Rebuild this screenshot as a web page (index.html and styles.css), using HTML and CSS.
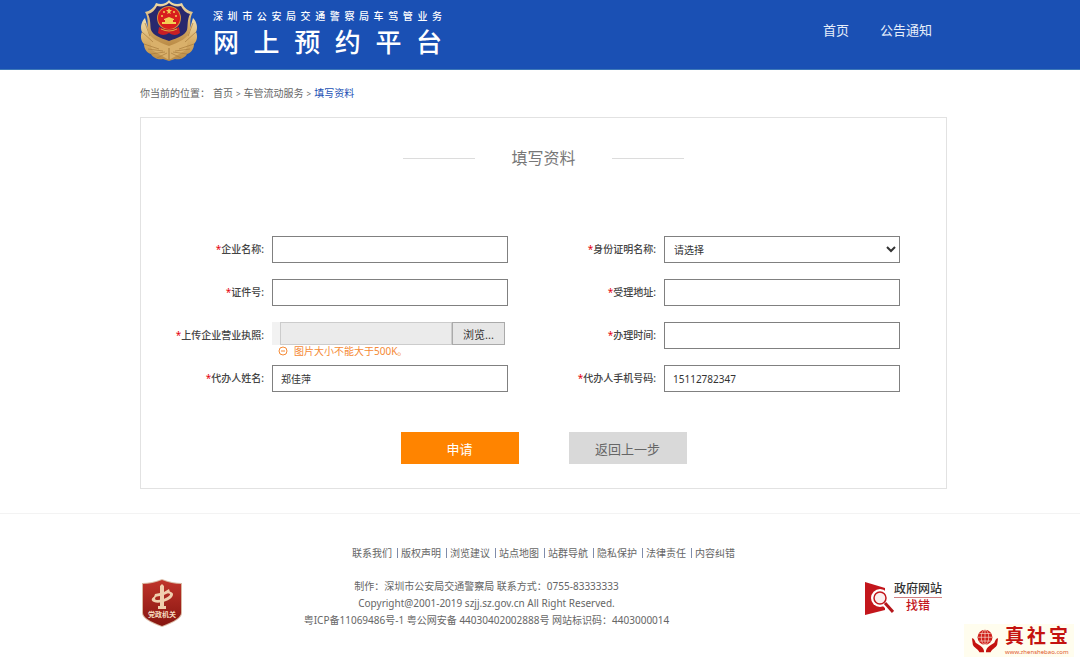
FILE: index.html
```
<!DOCTYPE html>
<html lang="zh-CN">
<head>
    <meta charset="UTF-8">
    <meta name="viewport" content="width=device-width, initial-scale=1.0">
    <title>网上预约平台 - 填写资料</title>
    <link rel="stylesheet" href="styles.css">
</head>
<body>
    <header class="header">
        <div class="container header-inner">
            <a href="#" class="brand">
                <svg class="emblem" viewBox="0 0 58 62" aria-hidden="true">
                    <defs>
                        <linearGradient id="gold" x1="0" y1="0" x2="0" y2="1">
                            <stop offset="0" stop-color="#f0dfb0"/>
                            <stop offset="0.5" stop-color="#d9b06a"/>
                            <stop offset="1" stop-color="#b98a45"/>
                        </linearGradient>
                    </defs>
                    <path fill="url(#gold)" d="M5 18C1 22 0 28 2 32C0 36 1 41 4 44C4 49 7 53 11 54C13 58 18 60 23 59L29 61L35 59C40 60 45 58 47 54C51 53 54 49 54 44C57 41 58 36 56 32C58 28 57 22 53 18L46 42L29 52L12 42Z"/>
                    <path fill="#d9b06a" d="M8 32L29 44L50 32L46 50L29 60L12 50Z"/>
                    <g fill="none" stroke="#a87b3c" stroke-width="0.7">
                        <path d="M2 32L13 42M4 44L19 49M11 54L25 52M5 23L10 36M8 49L23 51M17 58L27 53"/>
                        <path d="M56 32L45 42M54 44L39 49M47 54L33 52M53 23L48 36M50 49L35 51M41 58L31 53"/>
                    </g>
                    <path fill="url(#gold)" d="M29 0C32 4 37 5 42 3C44 8 48 11 53 12C49 18 51 25 50 31C48 38 40 42 29 46C18 42 10 38 8 31C7 25 9 18 5 12C10 11 14 8 16 3C21 5 26 4 29 0Z"/>
                    <path fill="#28286e" d="M29 3C32 6 37 7 41 6C43 10 46 13 50 14C47 20 48 26 47 30C45 35 38 38 29 41C20 38 13 35 11 30C10 26 11 20 8 14C12 13 15 10 17 6C21 7 26 6 29 3Z"/>
                    <circle cx="29" cy="18" r="12" fill="#d8903e"/>
                    <circle cx="29" cy="18" r="11" fill="#d81e1e"/>
                    <path fill="#c91f24" d="M19 27Q29 32 39 27L40 33Q35 37 29 33Q23 37 18 33Z"/>
                    <path fill="#f4cf55" d="M29 8L30 10L32 10L30 12L31 14L29 13L27 14L28 12L26 10L28 10ZM24 19L29 17L34 19V20H33V22H36V24H22V22H25V20H24Z"/>
                    <g fill="#f4cf55"><circle cx="24" cy="12" r="1"/><circle cx="34" cy="12" r="1"/><circle cx="22" cy="16" r="1"/><circle cx="36" cy="16" r="1"/></g>
                    <path fill="none" stroke="#e2a843" d="M21 29Q29 33 37 29"/>
                    <path fill="none" stroke="#94692f" stroke-width="0.8" d="M29 48V60"/>
                </svg>
                <span class="brand-text">
                    <span class="brand-sub">深圳市公安局交通警察局车驾管业务</span>
                    <span class="brand-name">网上预约平台</span>
                </span>
            </a>
            <nav class="nav">
                <a href="#">首页</a>
                <a href="#">公告通知</a>
            </nav>
        </div>
    </header>

    <main class="container">
        <nav class="breadcrumb">
            <span class="breadcrumb-label">你当前的位置：</span>
            <a href="#">首页</a>
            <span class="sep">&gt;</span>
            <a href="#">车管流动服务</a>
            <span class="sep">&gt;</span>
            <a href="#" class="current">填写资料</a>
        </nav>

        <section class="panel">
            <h1 class="panel-title">填写资料</h1>
            <form>
                <div class="form-grid">
                    <label for="company"><i>*</i>企业名称:</label>
                    <input type="text" id="company" class="field">

                    <label for="idType"><i>*</i>身份证明名称:</label>
                    <select id="idType" class="field">
                        <option>请选择</option>
                    </select>

                    <label for="idNumber"><i>*</i>证件号:</label>
                    <input type="text" id="idNumber" class="field">

                    <label for="address"><i>*</i>受理地址:</label>
                    <input type="text" id="address" class="field">

                    <label for="license"><i>*</i>上传企业营业执照:</label>
                    <div class="upload">
                        <div class="upload-row">
                            <input type="text" id="license" class="upload-path" readonly>
                            <button type="button" class="upload-btn">浏览...</button>
                        </div>
                        <p class="hint">
                            <svg viewBox="0 0 10 10" aria-hidden="true"><circle cx="5" cy="5" r="4"/><path d="M3 5H7"/></svg>
                            图片大小不能大于500K。
                        </p>
                    </div>

                    <label for="time"><i>*</i>办理时间:</label>
                    <input type="text" id="time" class="field">

                    <label for="agent"><i>*</i>代办人姓名:</label>
                    <input type="text" id="agent" class="field" value="郑佳萍">

                    <label for="phone"><i>*</i>代办人手机号码:</label>
                    <input type="tel" id="phone" class="field" value="15112782347">
                </div>
                <div class="actions">
                    <button type="submit" class="btn btn-primary">申请</button>
                    <button type="button" class="btn">返回上一步</button>
                </div>
            </form>
        </section>
    </main>

    <footer class="footer">
        <div class="container">
            <ul class="footer-links">
                <li><a href="#">联系我们</a></li>
                <li><a href="#">版权声明</a></li>
                <li><a href="#">浏览建议</a></li>
                <li><a href="#">站点地图</a></li>
                <li><a href="#">站群导航</a></li>
                <li><a href="#">隐私保护</a></li>
                <li><a href="#">法律责任</a></li>
                <li><a href="#">内容纠错</a></li>
            </ul>
            <div class="footer-info">
                <a href="#" class="gov-badge" aria-label="党政机关">
                    <svg viewBox="0 0 42 50">
                        <defs>
                            <linearGradient id="shield" x1="0" y1="0" x2="0" y2="1">
                                <stop offset="0" stop-color="#c0342a"/>
                                <stop offset="1" stop-color="#861510"/>
                            </linearGradient>
                        </defs>
                        <path d="M21 1Q31 5 41 5V35Q41 42 21 49Q1 42 1 35V5Q11 5 21 1Z" fill="#d9b9a4"/>
                        <path d="M21 2Q31 6 40 6V35Q40 41 21 48Q2 41 2 35V6Q11 6 21 2Z" fill="url(#shield)"/>
                        <g fill="#f0cfae">
                            <path d="M19 8L21 6L23 8V14L28 11L29 14L23 17V28H25V31H17V28H19V18L13 19L14 16L19 15Z"/>
                            <path d="M23 15C30 12 34 15 31 19C28 23 18 26 13 24C8 22 12 18 17 17C13 20 13 22 17 22C22 22 30 18 29 16C28 15 26 15 23 16Z"/>
                        </g>
                        <text x="21" y="39" text-anchor="middle" class="gov-badge-text">党政机关</text>
                    </svg>
                </a>
                <div class="footer-text">
                    <p>制作：深圳市公安局交通警察局 联系方式：0755-83333333</p>
                    <p>Copyright@2001-2019 szjj.sz.gov.cn All Right Reserved.</p>
                    <p>粤ICP备11069486号-1 粤公网安备 44030402002888号 网站标识码：4403000014</p>
                </div>
                <a href="#" class="report">
                    <svg viewBox="1 0 30 36" aria-hidden="true">
                        <path d="M2 1L22 7V29L2 34Z" fill="#c3161c"/>
                        <path d="M21 22L29 30" stroke="#fff" stroke-width="6"/>
                        <circle cx="17" cy="17" r="9" fill="#fff"/>
                        <circle cx="17" cy="17" r="6" fill="#fbeeee" stroke="#c3161c" stroke-width="1.5"/>
                        <path d="M22 22L30 31" stroke="#b5171c" stroke-width="3"/>
                    </svg>
                    <span class="report-text">
                        <span>政府网站</span>
                        <span class="report-action">找错</span>
                    </span>
                </a>
            </div>
        </div>
    </footer>

    <div class="watermark">
        <svg viewBox="0 0 30 26" aria-hidden="true">
            <circle cx="15" cy="9" r="8" fill="#cf1f1a"/>
            <g fill="none" stroke="#fffdee" stroke-width="0.6">
                <ellipse cx="15" cy="9" rx="4" ry="8"/>
                <path d="M15 1V17M7 9H23M9 5H21M9 13H21"/>
            </g>
            <g fill="#c4120f">
                <path d="M1 10C3 10 4 12 5 15L10 18C13 20 14 22 14 25H9C8 22 3 20 2 17Z"/>
                <path d="M29 10C27 10 26 12 25 15L20 18C17 20 16 22 16 25H21C22 22 27 20 28 17Z"/>
            </g>
        </svg>
        <span class="watermark-text">
            <span class="watermark-name">真社宝</span>
            <span class="watermark-url">www.zhenshebao.com</span>
        </span>
    </div>
</body>
</html>
```
FILE: styles.css
```
:root {
    --blue: #1a50b4;
    --orange: #ff8400;
    --text: #666;
    --border: #e2e2e2;
    --field-border: #808080;
}

* {
    margin: 0;
    padding: 0;
    box-sizing: border-box;
}

body {
    background: #fff;
    color: var(--text);
    font-family: "Noto Sans", "Noto Sans CJK SC", sans-serif;
    font-size: 10px;
    line-height: 17px;
}

a {
    color: inherit;
    text-decoration: none;
}

input,
select,
button {
    font-family: inherit;
    font-size: 10px;
    color: #333;
}

.container {
    margin: 0 133px 0 140px;
}

/* Header */
.header {
    background: var(--blue);
    border-bottom: 1px solid #3d78b8;
}

.header-inner {
    display: flex;
    justify-content: space-between;
    align-items: flex-start;
    min-height: 69px;
}

.brand {
    display: flex;
    gap: 15px;
    color: #fff;
}

.emblem {
    width: 58px;
    height: 62px;
}

.brand-text {
    width: 229px;
    padding-top: 8px;
}

.brand-sub,
.brand-name {
    display: block;
    font-weight: 500;
    text-align: justify;
    text-align-last: justify;
}

.brand-sub {
    font-size: 10px;
    line-height: 16px;
}

.brand-name {
    font-size: 26px;
    line-height: 36px;
}

.nav {
    display: flex;
    gap: 31px;
    padding: 22px 15px 0 0;
    color: #e6eefa;
    font-size: 13px;
}

/* Breadcrumb */
.breadcrumb {
    display: flex;
    gap: 3px;
    padding: 15px 0;
}

.breadcrumb .sep {
    font-size: 8px;
}

.breadcrumb .current {
    color: var(--blue);
}

/* Form panel */
.panel {
    border: 1px solid var(--border);
    padding: 28px 0 24px;
}

.panel-title {
    display: flex;
    justify-content: center;
    align-items: center;
    gap: 36px;
    margin-bottom: 66px;
    color: #777;
    font-size: 16px;
    font-weight: 400;
    line-height: 24px;
}

.panel-title::before,
.panel-title::after {
    content: "";
    width: 72px;
    height: 1px;
    background: #dcdcdc;
}

.form-grid {
    display: grid;
    grid-template-columns: 123px 1fr 140px 1fr;
    gap: 16px 8px;
    padding-right: 46px;
}

.form-grid label {
    color: #444;
    font-weight: 500;
    line-height: 27px;
    text-align: right;
}

.form-grid label i {
    color: #e60012;
    font-style: normal;
    font-weight: 400;
}

.field {
    width: 100%;
    height: 27px;
    padding: 0 8px;
    background: #fff;
    border: 1px solid var(--field-border);
    border-radius: 0;
}

select.field {
    padding: 0 0 0 5px;
}

.upload-row {
    display: flex;
    height: 23px;
    margin-right: 3px;
    padding-left: 8px;
    background: #f2f2f2;
}

.upload-path {
    flex: 1;
    min-width: 0;
    background: #ebebeb;
    border: 1px solid #ccc;
}

.upload-btn {
    width: 53px;
    background: #e6e6e6;
    border: 1px solid #aaa;
    font-size: 11px;
}

.hint {
    display: flex;
    align-items: center;
    gap: 6px;
    margin-bottom: -8px;
    padding-left: 6px;
    color: #f58a35;
    line-height: 12px;
}

.hint svg {
    width: 10px;
    height: 10px;
    fill: none;
    stroke: currentColor;
}

.actions {
    display: flex;
    justify-content: center;
    gap: 50px;
    margin-top: 40px;
}

.btn {
    width: 118px;
    height: 32px;
    background: #d9d9d9;
    border: 0;
    color: #666;
    font-size: 13px;
    cursor: pointer;
}

.btn-primary {
    background: var(--orange);
    color: #fff;
}

/* Footer */
.footer {
    margin-top: 24px;
    padding: 30px 0;
    border-top: 1px solid #f3f3f3;
}

.footer-links {
    display: flex;
    justify-content: center;
    list-style: none;
    line-height: 10px;
    padding: 4px 0;
}

.footer-links li + li {
    margin-left: 5px;
    padding-left: 3px;
    border-left: 1px solid #7f8cab;
}

.footer-info {
    display: flex;
    align-items: flex-start;
    margin-top: 16px;
}

.gov-badge svg {
    display: block;
    width: 42px;
    height: 50px;
    margin-left: 1px;
}

.gov-badge-text {
    fill: #f6dcc0;
    font-size: 7px;
    font-weight: 700;
}

.footer-text {
    flex: 1;
    margin-right: 74px;
    text-align: center;
}

.report {
    display: flex;
    padding: 3px 5px 0 0;
}

.report svg {
    width: 30px;
    height: 36px;
}

.report-text {
    display: flex;
    flex-direction: column;
    align-items: center;
    color: #333;
    font-size: 12px;
    font-weight: 500;
    line-height: 16px;
}

.report-action {
    width: 100%;
    border-top: 1px solid #d08080;
    color: #c3161c;
    text-align: center;
}

/* Corner logo, over the page */
.watermark {
    position: absolute;
    right: 6px;
    bottom: 5px;
    display: flex;
    align-items: center;
    gap: 6px;
    padding: 1px 6px 1px 7px;
    background: #fffdee;
    color: #c4120f;
}

.watermark svg {
    width: 28px;
    height: 26px;
}

.watermark-text {
    width: 63px;
}

.watermark-name,
.watermark-url {
    display: block;
    text-align: justify;
    text-align-last: justify;
}

.watermark-name {
    font-size: 19px;
    font-weight: 700;
    line-height: 23px;
}

.watermark-url {
    color: #e0562a;
    font-size: 6px;
    line-height: 8px;
}

@media (max-width: 900px) {
    .container {
        margin: 0 16px;
    }

    .form-grid {
        grid-template-columns: 123px 1fr;
        padding-right: 16px;
    }

    .header-inner,
    .footer-info {
        flex-wrap: wrap;
    }
}
```
